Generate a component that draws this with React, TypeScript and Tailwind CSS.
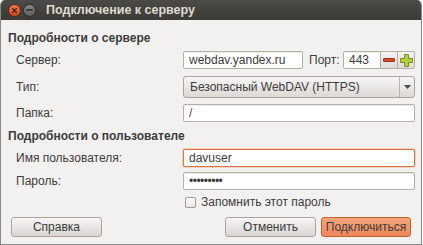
import React from "react";

const font = { fontFamily: '"Liberation Sans", "DejaVu Sans", sans-serif' };

function Field({ value, focused = false, className = "" }: { value: string; focused?: boolean; className?: string }) {
  return (
    <div
      className={`h-[18px] shrink-0 flex items-center px-[5px] rounded-[2px] bg-white text-[12px] text-[#3c3c3c] ${
        focused ? "border border-[#d7743f] shadow-[0_0_0_1px_rgba(240,150,100,0.35)]" : "border border-[#b4b0a8] shadow-[inset_0_1px_1px_rgba(0,0,0,0.08)]"
      } ${className}`}
    >
      {value}
    </div>
  );
}

function Button({ label, primary = false, className = "" }: { label: string; primary?: boolean; className?: string }) {
  return (
    <div
      className={`h-[20px] shrink-0 flex items-center justify-center rounded-[3px] text-[12px] ${
        primary
          ? "border border-[#c4602f] bg-gradient-to-b from-[#f6a47c] to-[#ec875a] text-[#3c3c3c]"
          : "border border-[#a9a59e] bg-gradient-to-b from-[#f7f6f5] to-[#d9d6d2] text-[#3c3c3c]"
      } ${className}`}
    >
      {label}
    </div>
  );
}

function Row({ label, children, className = "" }: { label: string; children: React.ReactNode; className?: string }) {
  return (
    <div className={`flex items-center ${className}`}>
      <div className="w-[182px] shrink-0 pl-[15px] text-[12px] text-[#3c3c3c]">{label}</div>
      <div className="flex-1 flex items-center">{children}</div>
    </div>
  );
}

export default function App() {
  return (
    <div className="w-[423px] h-[245px] bg-white" style={font}>
      <div className="w-[422px] h-[245px] flex flex-col border-x border-b border-[#8c8a86] rounded-t-[5px] overflow-hidden">
        <div className="h-[20px] flex items-center bg-gradient-to-b from-[#4b4a46] to-[#3b3a36] px-[7px] gap-[2px]">
          <div className="w-[13px] h-[13px] rounded-full bg-gradient-to-b from-[#f37b4f] to-[#d2451b] border border-[#5a2a1a] flex items-center justify-center">
            <svg width="7" height="7" viewBox="0 0 7 7">
              <path d="M1.5 1.5 L5.5 5.5 M5.5 1.5 L1.5 5.5" stroke="#4a2414" strokeWidth="1.4" strokeLinecap="round" />
            </svg>
          </div>
          <div className="w-[13px] h-[13px] rounded-full bg-gradient-to-b from-[#8a8984] to-[#5f5e5a] border border-[#2e2d2a] flex items-center justify-center">
            <div className="w-[7px] h-[2px] bg-[#3a3935] rounded-[1px]" />
          </div>
          <div className="ml-[8px] text-[12.5px] font-bold text-[#dfdbd2]">Подключение к серверу</div>
        </div>

        <div className="flex-1 bg-[#f2f1f0] flex flex-col pr-[6px]">
          <div className="h-[16px] mt-[10px] pl-[7px] flex items-center text-[12px] font-bold text-[#3c3c3c]">Подробности о сервере</div>

          <Row label="Сервер:" className="mt-[5px] h-[18px]">
            <Field value="webdav.yandex.ru" className="w-[120px]" />
            <div className="ml-[6px] w-[34px] text-[12px] text-[#3c3c3c]">Порт:</div>
            <Field value="443" className="w-[38px] rounded-r-none" />
            <div className="h-[18px] w-[17px] border-y border-r border-[#b4b0a8] bg-gradient-to-b from-[#f5f4f3] to-[#dedbd7] flex items-center justify-center">
              <div className="w-[12px] h-[4px] bg-[#d9482a] border border-[#9c2f18] rounded-[1px]" />
            </div>
            <div className="h-[18px] w-[17px] border-y border-r border-[#b4b0a8] rounded-r-[2px] bg-gradient-to-b from-[#f5f4f3] to-[#dedbd7] flex items-center justify-center">
              <svg width="13" height="13" viewBox="0 0 13 13">
                <path d="M4.5 0.5 H8.5 V4.5 H12.5 V8.5 H8.5 V12.5 H4.5 V8.5 H0.5 V4.5 H4.5 Z" fill="#b5cf3e" stroke="#7a8f22" strokeWidth="1" />
              </svg>
            </div>
          </Row>

          <Row label="Тип:" className="mt-[7px] h-[22px]">
            <div className="w-[232px] h-[22px] flex rounded-[3px] border border-[#a9a59e] bg-gradient-to-b from-[#f7f6f5] to-[#dcd9d5]">
              <div className="flex-1 pl-[6px] flex items-center text-[12px] text-[#3c3c3c]">Безопасный WebDAV (HTTPS)</div>
              <div className="w-[15px] border-l border-[#b9b5ae] flex items-center justify-center">
                <svg width="7" height="4" viewBox="0 0 7 4">
                  <path d="M0 0 H7 L3.5 4 Z" fill="#4a4a4a" />
                </svg>
              </div>
            </div>
          </Row>

          <Row label="Папка:" className="mt-[6px] h-[18px]">
            <Field value="/" className="w-[232px]" />
          </Row>

          <div className="h-[16px] mt-[6px] pl-[7px] flex items-center text-[12px] font-bold text-[#3c3c3c]">Подробности о пользователе</div>

          <Row label="Имя пользователя:" className="mt-[5px] h-[18px]">
            <Field value="davuser" focused className="w-[232px]" />
          </Row>

          <Row label="Пароль:" className="mt-[5px] h-[18px]">
            <Field value="•••••••••" className="w-[232px] text-[9px] tracking-[-0.5px]" />
          </Row>

          <Row label="" className="mt-[4px] h-[16px]">
            <div className="ml-[2px] w-[11px] h-[11px] rounded-[2px] border border-[#9e9a93] bg-gradient-to-b from-[#ffffff] to-[#e8e6e3]" />
            <div className="ml-[5px] text-[12px] text-[#3c3c3c]">Запомнить этот пароль</div>
          </Row>

          <div className="mt-[7px] flex items-center pl-[10px]">
            <Button label="Справка" className="w-[91px] min-w-[91px]" />
            <div className="flex-1" />
            <Button label="Отменить" className="w-[91px] min-w-[91px]" />
            <Button label="Подключиться" primary className="w-[90px] min-w-[90px] ml-[5px] mr-[4px]" />
          </div>
        </div>
      </div>
    </div>
  );
}
